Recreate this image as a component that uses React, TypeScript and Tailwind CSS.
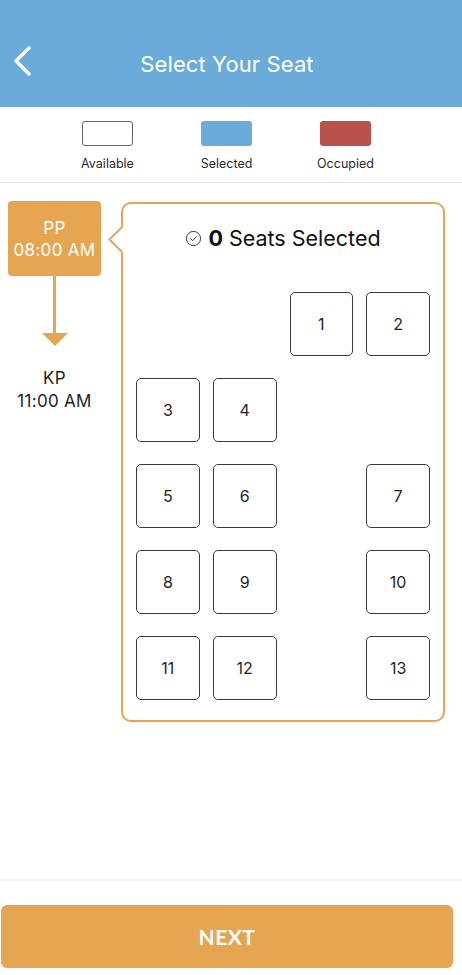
import React from "react";

const ORANGE = "#e5a551";

type Cell = number | null;
const rows: Cell[][] = [
  [null, null, 1, 2],
  [3, 4, null, null],
  [5, 6, null, 7],
  [8, 9, null, 10],
  [11, 12, null, 13],
];

function Seat({ n }: { n: Cell }) {
  if (n === null) return <div className="w-[64px] h-[64px]" />;
  return (
    <div className="w-[64px] h-[64px] rounded-[5px] border border-[#3a3a3a] flex items-center justify-center text-[16px] text-[#1f1f1f]">
      {n}
    </div>
  );
}

export default function App() {
  return (
    <div
      className="w-[462px] h-[975px] bg-white flex flex-col overflow-hidden"
      style={{ fontFamily: "Inter, 'Noto Sans', sans-serif" }}
    >
      {/* Header */}
      <div className="h-[107px] bg-[#6aabd9] relative flex items-center justify-center shrink-0">
        <svg
          className="absolute left-[10px] top-[44px]"
          width="24"
          height="34"
          viewBox="0 0 24 34"
          fill="none"
        >
          <polyline
            points="19,4 6,17 19,30"
            stroke="white"
            strokeWidth="3.4"
            strokeLinecap="round"
            strokeLinejoin="round"
          />
        </svg>
        <div className="text-white text-[22px] pr-[8px] mt-[22px] tracking-[0.1px]">
          Select Your Seat
        </div>
      </div>

      {/* Legend */}
      <div className="h-[76px] border-b border-[#e6e6e6] flex pl-[48px] pt-[14px] shrink-0">
        <div className="w-[119px] flex flex-col items-center">
          <div className="w-[51px] h-[25px] rounded-[3px] border border-[#666] bg-white" />
          <div className="mt-[9px] text-[12.5px] text-[#2a2a2a]">Available</div>
        </div>
        <div className="w-[119px] flex flex-col items-center">
          <div className="w-[51px] h-[25px] rounded-[3px] bg-[#6aabd9]" />
          <div className="mt-[9px] text-[12.5px] text-[#2a2a2a]">Selected</div>
        </div>
        <div className="w-[119px] flex flex-col items-center">
          <div className="w-[51px] h-[25px] rounded-[3px] bg-[#b9524a]" />
          <div className="mt-[9px] text-[12.5px] text-[#2a2a2a]">Occupied</div>
        </div>
      </div>

      {/* Main */}
      <div className="flex-1 flex pt-[18px]">
        {/* Route column */}
        <div className="w-[93px] ml-[8px] flex flex-col items-center">
          <div className="w-[93px] h-[75px] rounded-[4px] bg-[#e5a551] flex flex-col items-center justify-center text-white text-[17px] leading-[22px] tracking-[0.3px]">
            <div>PP</div>
            <div>08:00 AM</div>
          </div>
          <div className="w-[3px] h-[57px] bg-[#e5a551]" />
          <svg width="26" height="13" viewBox="0 0 26 13">
            <polygon points="0,0 26,0 13,13" fill={ORANGE} />
          </svg>
          <div className="mt-[21px] text-[17px] leading-[23px] tracking-[0.3px] text-[#1f1f1f] text-center">
            <div>KP</div>
            <div>11:00 AM</div>
          </div>
        </div>

        {/* Card */}
        <div className="ml-[20px] mt-[1px] relative self-start">
          <div className="w-[324px] border-2 border-[#e5a551] rounded-[10px] px-[13px] pt-[20px] pb-[20px]">
            <div className="flex items-center justify-center h-[28px] text-[21.5px] text-[#111]">
              <svg
                width="17"
                height="17"
                viewBox="0 0 24 24"
                fill="none"
                stroke="#333"
                strokeWidth="1.4"
                className="mr-[6px] mt-[1px]"
              >
                <circle cx="12" cy="12" r="10" />
                <path d="m8 12.3 2.8 2.8 5.2-5.6" strokeLinecap="round" strokeLinejoin="round" />
              </svg>
              <span className="font-bold mr-[6px]">0</span>
              <span>Seats Selected</span>
            </div>
            <div className="mt-[40px] flex flex-col gap-y-[22px]">
              {rows.map((r, i) => (
                <div key={i} className="flex gap-x-[13px]">
                  {r.map((n, j) => (
                    <Seat key={j} n={n} />
                  ))}
                </div>
              ))}
            </div>
          </div>
          <svg
            className="absolute left-[-13px] top-[25px]"
            width="16"
            height="25"
            viewBox="0 0 16 25"
          >
            <polygon points="16,0 14,0 1,12.5 14,25 16,25" fill="white" />
            <polyline
              points="14,0 1.5,12.5 14,25"
              fill="none"
              stroke={ORANGE}
              strokeWidth="2"
            />
          </svg>
        </div>
      </div>

      {/* Footer */}
      <div className="h-[96px] border-t-2 border-[#f3f3f3] shrink-0 pt-[24px]">
        <button
          className="ml-[1px] w-[452px] h-[63px] rounded-[6px] bg-[#e5a551] text-white text-[21px] font-bold tracking-[0.5px] flex items-center justify-center"
          style={{ fontFamily: "Lato, 'Open Sans', sans-serif" }}
        >
          NEXT
        </button>
      </div>
    </div>
  );
}
